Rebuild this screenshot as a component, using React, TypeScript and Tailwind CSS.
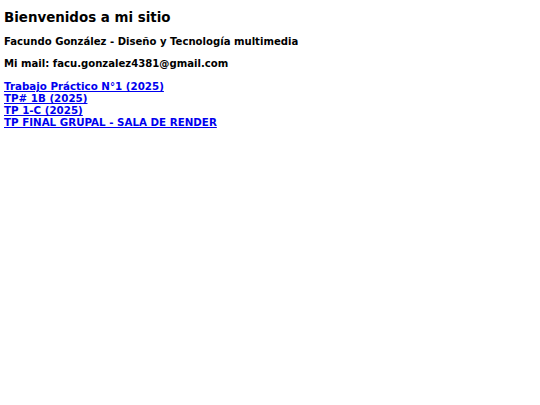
export default function App() {
  return (
    <div className="px-1 pt-[10px] text-black font-['DejaVu_Sans',sans-serif] font-bold">
      <h1 className="text-[13.4px] leading-[16px]">Bienvenidos a mi sitio</h1>
      <p className="mt-[10px] text-[10.1px] leading-[12px]">Facundo González - Diseño y Tecnología multimedia</p>
      <p className="mt-[10px] text-[10.1px] leading-[12px]">Mi mail: facu.gonzalez4381@gmail.com</p>
      <div className="mt-[10px] flex flex-col items-start text-[10.3px] leading-[12px]">
        <a href="#" className="text-[#0000ee] underline">Trabajo Práctico N°1 (2025)</a>
        <a href="#" className="text-[#0000ee] underline">TP# 1B (2025)</a>
        <a href="#" className="text-[#0000ee] underline">TP 1-C (2025)</a>
        <a href="#" className="text-[#0000ee] underline">TP FINAL GRUPAL - SALA DE RENDER</a>
      </div>
    </div>
  );
}
